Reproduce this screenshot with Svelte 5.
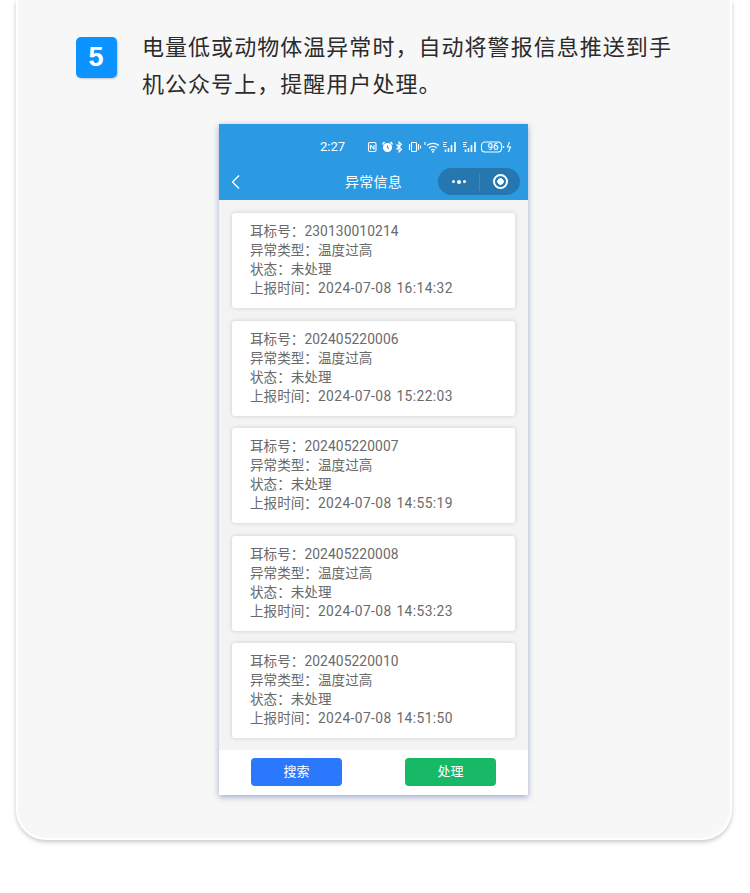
<script lang="ts">
	// 异常信息列表
	const records = [
		{ tag: '230130010214', time: '2024-07-08 16:14:32' },
		{ tag: '202405220006', time: '2024-07-08 15:22:03' },
		{ tag: '202405220007', time: '2024-07-08 14:55:19' },
		{ tag: '202405220008', time: '2024-07-08 14:53:23' },
		{ tag: '202405220010', time: '2024-07-08 14:51:50' }
	];
</script>

<div class="page">
	<div class="panel">
		<div class="step">
			<div class="badge">5</div>
			<p class="desc">电量低或动物体温异常时，自动将警报信息推送到手机公众号上，提醒用户处理。</p>
		</div>

		<div class="phone">
			<div class="head">
				<div class="status">
					<span class="clock">2:27</span>
					<svg class="status-icons" width="145" height="12" viewBox="0 0 145 12" fill="none" stroke="#fff" stroke-width="1.1">
						<!-- NFC -->
						<rect x="1.500" y="1.500" width="7.500" height="9" rx="1.500" />
						<path d="M3.500 4v4.500M3.500 4l3.500 4.500M7 4v4.500" />
						<!-- 闹钟 -->
						<circle cx="20.500" cy="6.500" r="4" fill="#fff" />
						<path d="M15.500 3.500l2-2.500M25.500 3.500l-2-2.500" stroke-width="1.500" />
						<path d="M20.500 4.500v2l1.500 1" stroke="#2b98e2" />
						<!-- 蓝牙 -->
						<path d="M29.500 3.500l5 5-2.500 2.500v-10l2.500 2.500-5 5" />
						<!-- 振动 -->
						<rect x="44.500" y="1.500" width="5" height="9" rx="0.800" />
						<path d="M42.500 3v6M51.500 3v6M53.500 4.500v3" />
						<!-- WiFi -->
						<path d="M60 4.500a10 10 0 0 1 12 0M62 7a6.500 6.500 0 0 1 8 0M64 9.300a3 3 0 0 1 4 0" stroke-width="1.300" />
						<circle cx="66" cy="10.800" r="1" fill="#fff" stroke="none" />
						<path d="M58 1v3" />
						<!-- 信号 -->
						<path d="M76 1.500h4M76 3.500h3M76 5.500h4" stroke-width="0.900" />
						<path d="M78.500 11V8.500M81.500 11V7M84.500 11V4M88 11V1" stroke-width="1.600" />
						<path d="M96 1.500h4M96 3.500h3M96 5.500h4" stroke-width="0.900" />
						<path d="M98.500 11V8.500M101.500 11V7M104.500 11V4M108 11V1" stroke-width="1.600" />
						<!-- 电量 -->
						<rect x="114.500" y="1" width="20" height="10" rx="3.500" />
						<path d="M136.500 5v2" stroke-width="1.300" />
						<path d="M142.500 1l-2 5h3l-2 5" />
					</svg>
					<span class="battery">96</span>
				</div>
				<div class="nav">
					<svg class="back" width="10" height="16" viewBox="0 0 10 16" fill="none" stroke="#fff" stroke-width="1.300">
						<path d="M8 1.500L1.500 8 8 14.500" />
					</svg>
					<span class="title">异常信息</span>
					<div class="capsule">
						<span class="dots"><i class="small"></i><i></i><i class="small"></i></span>
						<span class="sep"></span>
						<span class="ring"></span>
					</div>
				</div>
			</div>

			<div class="list">
				{#each records as r}
					<div class="item">
						<div>耳标号：<span class="num">{r.tag}</span></div>
						<div>异常类型：温度过高</div>
						<div>状态：未处理</div>
						<div>上报时间：<span class="num time">{r.time}</span></div>
					</div>
				{/each}
			</div>

			<div class="foot">
				<button class="btn search">搜索</button>
				<button class="btn handle">处理</button>
			</div>
		</div>
	</div>
</div>

<style>
	:global(body) {
		margin: 0;
		background: #ffffff;
	}

	* {
		box-sizing: border-box;
	}

	.page {
		height: 893px;
		padding: 0 18px 0 16px;
		overflow: hidden;
		font-family: 'Noto Sans CJK SC', 'Noto Sans', sans-serif;
	}

	.panel {
		height: 840px;
		padding: 37px 0 0;
		background: #f7f7f7;
		border: 2px solid #ffffff;
		border-top: none;
		border-radius: 0 0 30px 30px;
		box-shadow: 0 2px 4px rgba(0, 0, 0, 0.22);
	}

	.step {
		display: flex;
		gap: 25px;
		padding: 0 55px 0 58px;
	}

	.badge {
		flex: none;
		width: 41px;
		height: 41px;
		border-radius: 5px;
		background: #0c93ff;
		box-shadow: 1px 1px 2px rgba(0, 0, 0, 0.2);
		color: #ffffff;
		font-family: 'Liberation Sans', sans-serif;
		font-weight: 700;
		font-size: 27px;
		line-height: 41px;
		text-align: center;
		padding-right: 1px;
	}

	.desc {
		margin: -10px 0 0;
		font-size: 22px;
		letter-spacing: 1.04px;
		line-height: 37px;
		color: #2b2b2b;
	}

	.phone {
		width: 309px;
		height: 671px;
		margin: 23px 0 0 201px;
		display: flex;
		flex-direction: column;
		background: #f3f3f3;
		box-shadow: 0 2px 6px rgba(90, 105, 170, 0.55);
	}

	.head {
		height: 76px;
		flex: none;
		background: #2b9ae3;
		color: #ffffff;
	}

	.status {
		position: relative;
		height: 43px;
		padding: 15px 0 0 101px;
		display: flex;
		align-items: flex-start;
	}

	.clock {
		width: 25px;
		font-family: 'Roboto', sans-serif;
		font-size: 13px;
		line-height: 16px;
	}

	.status-icons {
		margin: 2px 0 0 22px;
	}

	.battery {
		position: absolute;
		left: 263px;
		top: 17px;
		width: 22px;
		text-align: center;
		font-family: 'Roboto', sans-serif;
		font-size: 9.500px;
		font-weight: 500;
		line-height: 12px;
	}

	.nav {
		position: relative;
		height: 33px;
		display: flex;
		align-items: center;
		justify-content: center;
	}

	.back {
		position: absolute;
		left: 12px;
		top: 7px;
	}

	.title {
		font-size: 14px;
		letter-spacing: 0.2px;
		margin-top: -5px;
	}

	.capsule {
		position: absolute;
		left: 219px;
		top: 1px;
		width: 82px;
		height: 27px;
		border-radius: 14px;
		background: #2677b0;
		display: flex;
		align-items: center;
	}

	.dots {
		width: 41px;
		display: flex;
		justify-content: center;
		align-items: center;
		gap: 2px;
	}

	.dots i {
		width: 4px;
		height: 4px;
		border-radius: 50%;
		background: #ffffff;
	}

	.dots i.small {
		width: 3px;
		height: 3px;
	}

	.sep {
		width: 1px;
		height: 18px;
		background: #3f8abd;
	}

	.ring {
		width: 15px;
		height: 15px;
		margin-left: 13px;
		border: 2px solid #ffffff;
		border-radius: 50%;
		background: radial-gradient(circle, #ffffff 0 3px, transparent 3.500px);
	}

	.list {
		flex: 1;
		padding: 13px 13px 0;
		display: flex;
		flex-direction: column;
		gap: 12.500px;
		overflow: hidden;
	}

	.item {
		flex: none;
		height: 95px;
		padding: 8px 18px 0;
		background: #ffffff;
		border-radius: 3px;
		box-shadow: 0 0 4px rgba(0, 0, 0, 0.16);
		font-size: 13.600px;
		color: #6a6a6a;
	}

	.item div {
		height: 19px;
		line-height: 19px;
		white-space: nowrap;
		overflow: hidden;
	}

	.num {
		font-family: 'Roboto', sans-serif;
		font-size: 13.800px;
		line-height: 1;
		letter-spacing: 0.100px;
	}

	.time {
		letter-spacing: 0.400px;
		word-spacing: 1px;
	}

	.foot {
		height: 45px;
		flex: none;
		background: #ffffff;
		display: flex;
		justify-content: space-between;
		padding: 8px 32px 0;
	}

	.btn {
		width: 91px;
		height: 28px;
		border: none;
		border-radius: 4px;
		color: #ffffff;
		font-family: inherit;
		font-size: 13px;
		line-height: 26px;
		padding: 0 0 2px;
	}

	.search {
		background: #2a78fb;
	}

	.handle {
		background: #17b866;
	}
</style>
